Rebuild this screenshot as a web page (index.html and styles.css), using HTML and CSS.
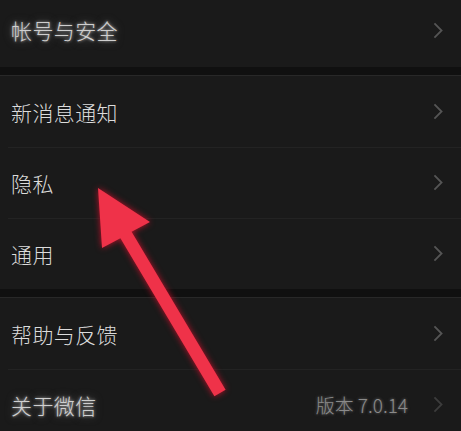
FILE: index.html
```html
<!doctype html>
<html lang="zh-CN">
<head>
    <meta charset="utf-8">
    <meta name="viewport" content="width=device-width, initial-scale=1">
    <title>设置</title>
    <link rel="stylesheet" href="styles.css">
</head>

<body>
    <div class="group">
        <div class="row first">
            <span class="label glow">帐号与安全</span>
            <svg class="chev" viewBox="0 0 10 16"><polyline points="2,2 8,8 2,14" /></svg>
        </div>
    </div>

    <div class="group">
        <div class="row">
            <span class="label">新消息通知</span>
            <svg class="chev" viewBox="0 0 10 16"><polyline points="2,2 8,8 2,14" /></svg>
        </div>
        <div class="row">
            <span class="label">隐私</span>
            <svg class="chev" viewBox="0 0 10 16"><polyline points="2,2 8,8 2,14" /></svg>
        </div>
        <div class="row">
            <span class="label">通用</span>
            <svg class="chev" viewBox="0 0 10 16"><polyline points="2,2 8,8 2,14" /></svg>
        </div>
    </div>

    <div class="group">
        <div class="row">
            <span class="label">帮助与反馈</span>
            <svg class="chev" viewBox="0 0 10 16"><polyline points="2,2 8,8 2,14" /></svg>
        </div>
        <div class="row">
            <span class="label glow">关于微信</span>
            <span class="value">版本 7.0.14</span>
            <svg class="chev dim" viewBox="0 0 10 16"><polyline points="2,2 8,8 2,14" /></svg>
        </div>
    </div>

    <svg class="arrow" viewBox="0 0 461 431" width="461" height="431">
        <polygon points="98,188 150,222 131.6,231.7 225.6,389.7 214.4,396.3 120.4,238.3 102,248" />
    </svg>
</body>
</html>
```

FILE: styles.css
```css
*,
*::after,
*::before {
  box-sizing: border-box;
}

body {
  margin: 0;
  width: 461px;
  height: 431px;
  overflow: hidden;
  position: relative;
  background: #101010;
  font-family: "Noto Sans CJK SC", "Noto Sans", sans-serif;
}

.group {
  background: #1a1a1a;
  border-top: 1px solid #282828;
  margin-bottom: 8px;
}

.group:first-child {
  border-top: none;
}

.row {
  height: 71px;
  display: flex;
  align-items: center;
  padding: 0 17px 0 11px;
  position: relative;
}

.row + .row::before {
  content: "";
  position: absolute;
  top: 0;
  left: 8px;
  right: 0;
  height: 1px;
  background: #232323;
}

.row.first {
  height: 67px;
  padding-bottom: 7px;
}

.label {
  flex: 1;
  color: #dcdcdc;
  font-size: 21px;
  font-weight: 300;
  letter-spacing: 0.4px;
}

.glow {
  color: #cfcfcf;
  text-shadow: 0 0 3px #bbbbbb, 0 0 8px #666666;
}

.value {
  color: #8a8a8a;
  font-size: 19px;
  font-weight: 300;
  margin-right: 24px;
  text-shadow: 0 0 3px #777777;
}

.chev {
  width: 12px;
  height: 19px;
  fill: none;
  stroke: #555555;
  stroke-width: 1.5;
}

.chev.dim {
  stroke: #3c3c3c;
}

.arrow {
  position: absolute;
  left: 0;
  top: 0;
  fill: #ef3249;
  filter: drop-shadow(0 0 3px #c0102a);
}
```
